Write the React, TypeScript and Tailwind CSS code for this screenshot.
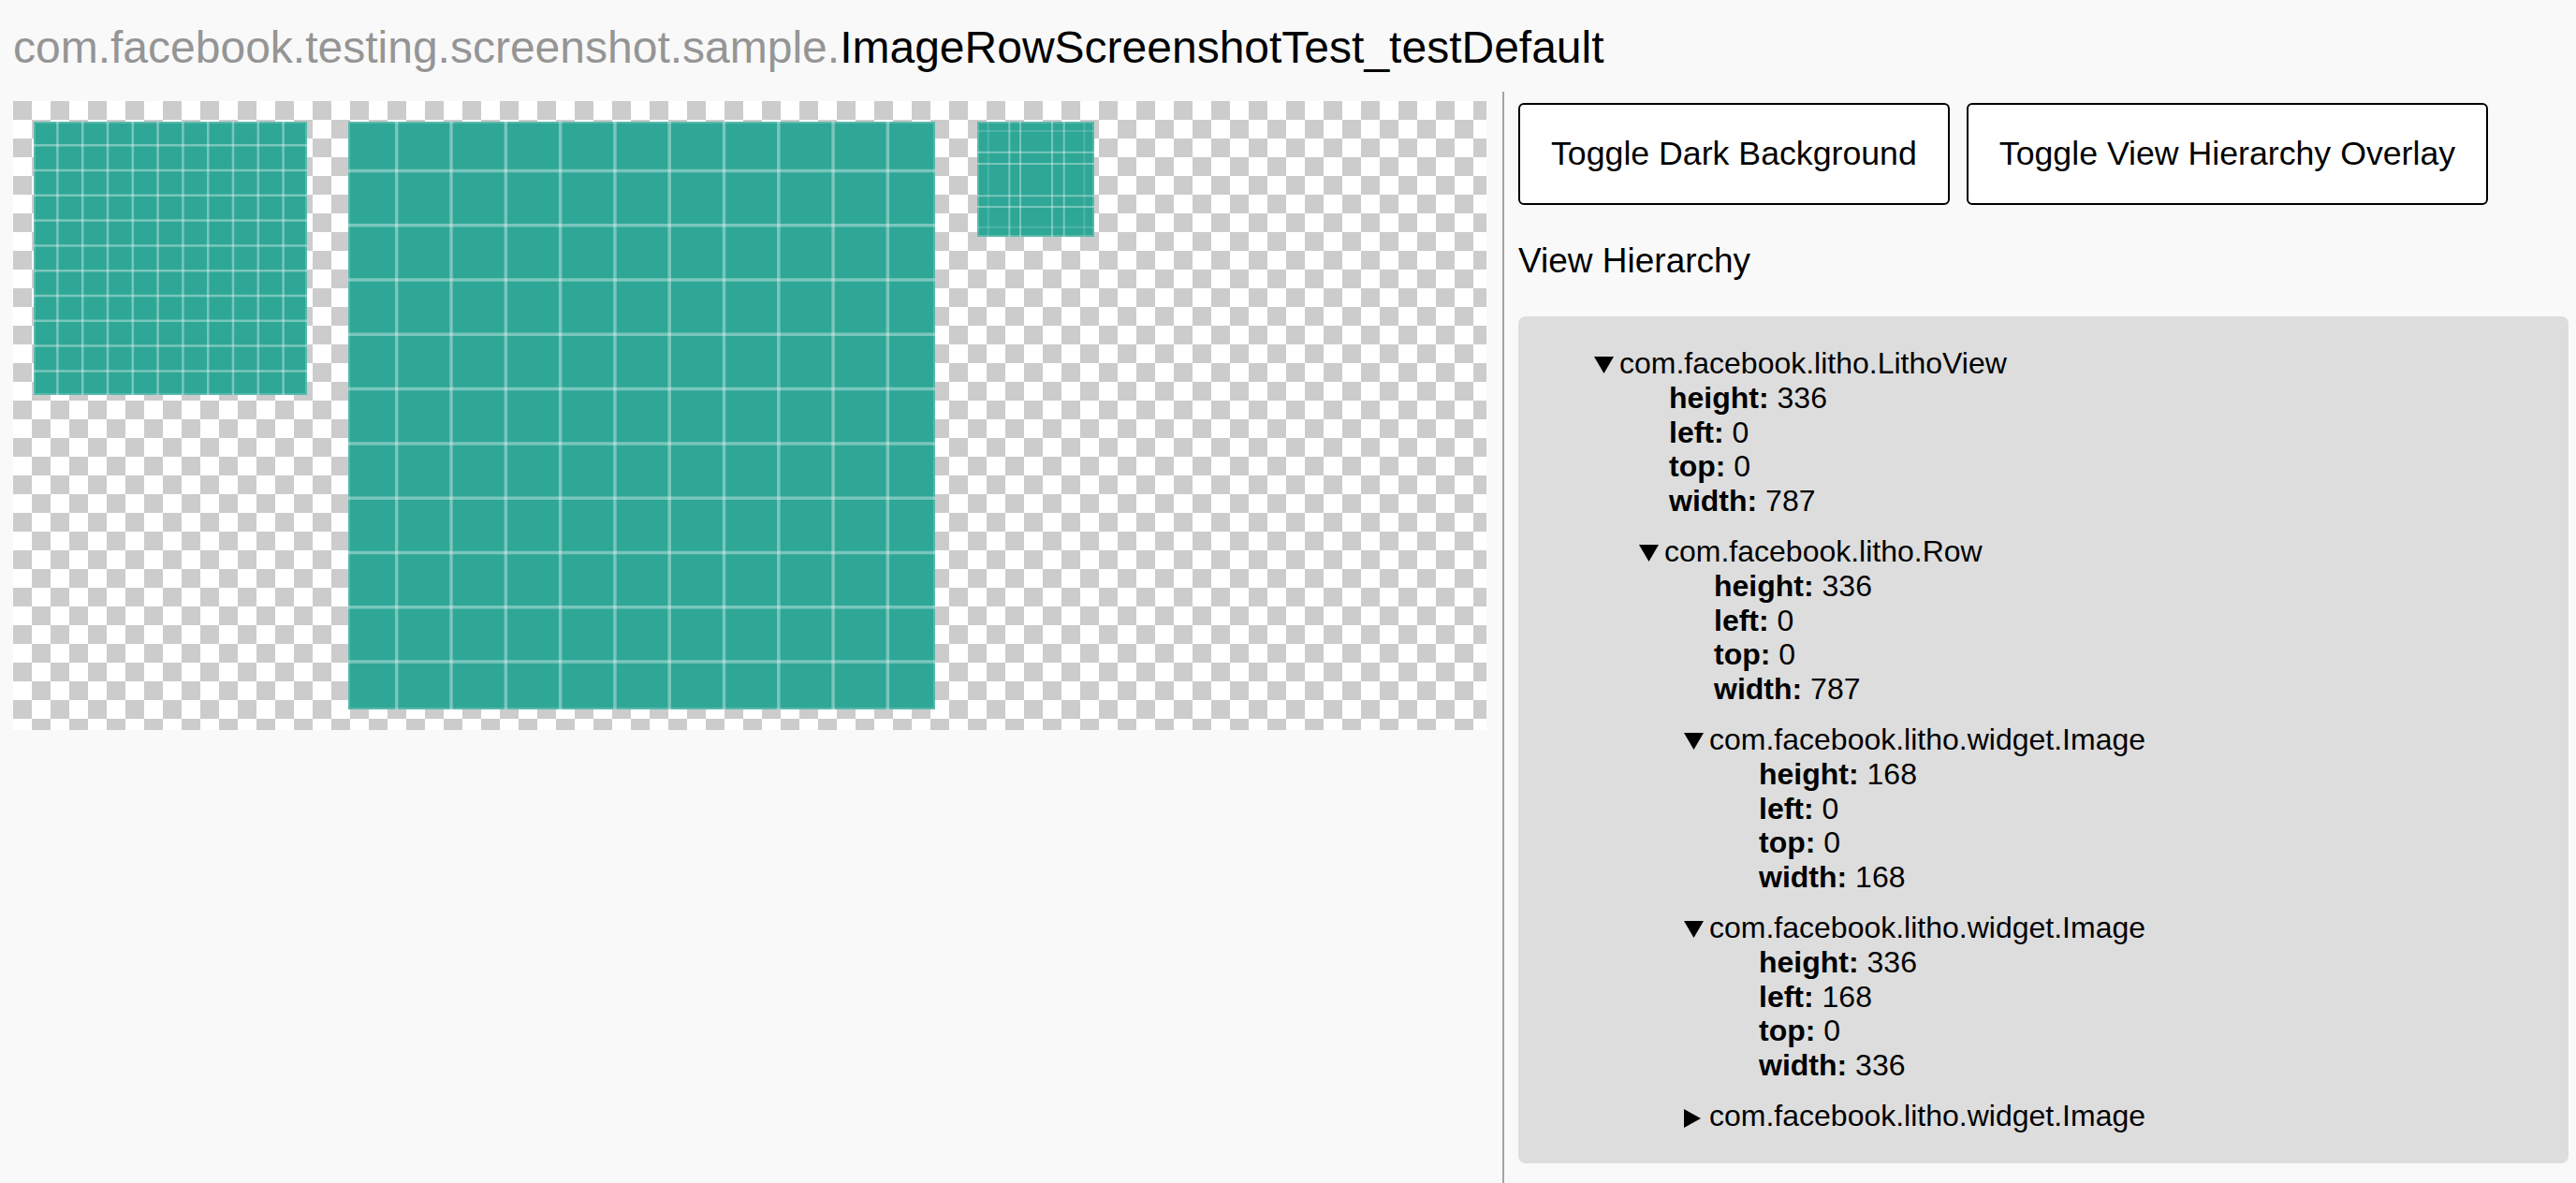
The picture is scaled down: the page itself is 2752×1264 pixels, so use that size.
import React from "react";

type Prop = [string, number];
type ViewNode = { name: string; props?: Prop[]; children?: ViewNode[]; collapsed?: boolean };

const box = (h: number, l: number, t: number, w: number): Prop[] => [
  ["height", h],
  ["left", l],
  ["top", t],
  ["width", w],
];

const tree: ViewNode = {
  name: "com.facebook.litho.LithoView",
  props: box(336, 0, 0, 787),
  children: [
    {
      name: "com.facebook.litho.Row",
      props: box(336, 0, 0, 787),
      children: [
        { name: "com.facebook.litho.widget.Image", props: box(168, 0, 0, 168) },
        { name: "com.facebook.litho.widget.Image", props: box(336, 168, 0, 336) },
        { name: "com.facebook.litho.widget.Image", collapsed: true },
      ],
    },
  ],
};

const TEAL = "#2ea797";

// ten evenly spaced grid lines with a margin on each side
const grid = (m: number, c: number) => Array.from({ length: 10 }, (_, i) => m + c * i);

type GridProps = {
  w: number;
  h: number;
  xs: number[];
  ys: number[];
  faintXs?: number[];
  faintYs?: number[];
  stroke: number;
};

function GridImage({ w, h, xs, ys, faintXs = [], faintYs = [], stroke }: GridProps) {
  return (
    <svg width={w} height={h} viewBox={`0 0 ${w} ${h}`} className="block">
      <rect width={w} height={h} fill={TEAL} />
      <rect x={1} y={1} width={w - 2} height={h - 2} fill="none" stroke="#fff" strokeOpacity={0.2} strokeWidth={2} />
      {xs.map((x) => (
        <line key={`x${x}`} x1={x} x2={x} y1={0} y2={h} stroke="#fff" strokeOpacity={0.36} strokeWidth={stroke} />
      ))}
      {ys.map((y) => (
        <line key={`y${y}`} x1={0} x2={w} y1={y} y2={y} stroke="#fff" strokeOpacity={0.36} strokeWidth={stroke} />
      ))}
      {faintXs.map((x) => (
        <line key={`fx${x}`} x1={x} x2={x} y1={0} y2={h} stroke="#fff" strokeOpacity={0.15} strokeWidth={stroke} />
      ))}
      {faintYs.map((y) => (
        <line key={`fy${y}`} x1={0} x2={w} y1={y} y2={y} stroke="#fff" strokeOpacity={0.15} strokeWidth={stroke} />
      ))}
    </svg>
  );
}

const DownArrow = () => (
  <svg width="21" height="18" viewBox="0 0 21 18" className="block">
    <polygon points="0,0 21,0 10.5,18" fill="#000" />
  </svg>
);

const RightArrow = () => (
  <svg width="18" height="20" viewBox="0 0 18 20" className="block">
    <polygon points="0,0 18,10 0,20" fill="#000" />
  </svg>
);

function TreeNode({ node }: { node: ViewNode }) {
  const open = !node.collapsed;
  return (
    <div>
      <div className="flex items-start">
        <span className="block w-[27px] shrink-0 pt-[11px]">{open ? <DownArrow /> : <RightArrow />}</span>
        <span>{node.name}</span>
      </div>
      {open && node.props && (
        <div className="pl-[80px]">
          {node.props.map(([k, v]) => (
            <div key={k}>
              <span className="font-bold">{k}:</span> {v}
            </div>
          ))}
        </div>
      )}
      {open && node.children && (
        <div className="pl-[48px]">
          {node.children.map((child, i) => (
            <div key={i} className="mt-[17px]">
              <TreeNode node={child} />
            </div>
          ))}
        </div>
      )}
    </div>
  );
}

export default function App() {
  return (
    <div className="h-[1264px] w-[2752px] overflow-hidden bg-[#f9f9f9] font-['Liberation_Sans',Arial,sans-serif] text-black">
      <h1 className="pl-[14px] pt-[23px] text-[48px] leading-[55px] font-normal whitespace-nowrap">
        <span className="text-[#959595]">com.facebook.testing.screenshot.sample.</span>
        <span>ImageRowScreenshotTest_testDefault</span>
      </h1>

      <div className="mt-[20px] flex h-[1166px]">
        {/* screenshot on a transparency checkerboard */}
        <div className="pl-[14px] pt-[10px]">
          <div className="flex h-[672px] w-[1574px] items-start overflow-hidden bg-[image:conic-gradient(#fff_25%,#ccc_0_50%,#fff_0_75%,#ccc_0)] bg-size-[40px_40px]">
            <div className="w-[336px] shrink-0 p-[22px]">
              <GridImage w={292} h={292} xs={grid(25.4, 26.8)} ys={grid(25.2, 26.8)} stroke={2.5} />
            </div>
            <div className="w-[672px] shrink-0 px-[22px] pt-[21.5px]">
              <GridImage w={627} h={628} xs={grid(51.7, 58.3)} ys={grid(52.4, 58.3)} stroke={3.5} />
            </div>
            <div className="shrink-0 pl-[21.5px] pt-[22px]">
              <GridImage
                w={125}
                h={123}
                xs={[34.3, 46, 80, 92.7]}
                ys={[32.7, 45, 79.3, 91]}
                faintXs={[11.7, 114.3]}
                faintYs={[10, 112.7]}
                stroke={2}
              />
            </div>
          </div>
        </div>

        <div className="ml-[17px] w-[2px] shrink-0 bg-[#a3a3a3]" />

        <div className="ml-[15px] w-[1122px] shrink-0 pt-[12px]">
          <div className="flex gap-[18px]">
            <button className="h-[109px] rounded-[6px] border-2 border-black bg-white px-[33px] text-[35.7px] leading-none whitespace-nowrap">
              Toggle Dark Background
            </button>
            <button className="h-[109px] rounded-[6px] border-2 border-black bg-white px-[33px] text-[35.7px] leading-none whitespace-nowrap">
              Toggle View Hierarchy Overlay
            </button>
          </div>

          <h3 className="mt-[38.5px] text-[37px] leading-[42.5px] font-normal">View Hierarchy</h3>

          <div className="mt-[38px] rounded-[8px] bg-[#dddddd] pt-[32px] pb-[32px] pl-[81px] text-[32px] leading-[36.8px] whitespace-nowrap">
            <TreeNode node={tree} />
          </div>
        </div>
      </div>
    </div>
  );
}
